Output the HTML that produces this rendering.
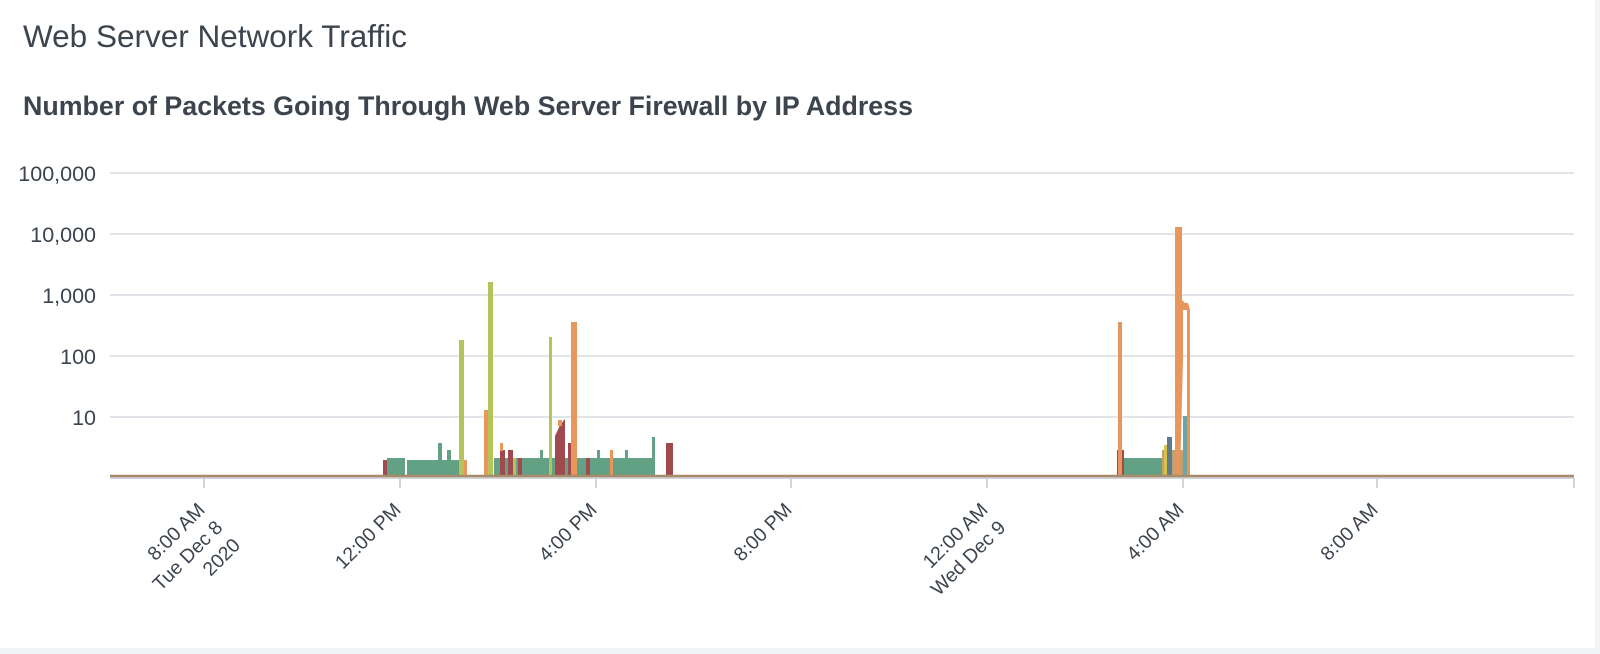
<!DOCTYPE html>
<html><head><meta charset="utf-8"><style>
html,body{margin:0;padding:0;background:#f2f3f5;}
#p{position:absolute;left:0;top:0;width:1595px;height:648px;background:#fff;}
svg{position:absolute;left:0;top:0;}
</style></head><body><div id="p"></div>
<svg width="1600" height="654" xmlns="http://www.w3.org/2000/svg" font-family="Liberation Sans, sans-serif">
<text x="23" y="47" font-size="31.5" fill="#3c444d">Web Server Network Traffic</text>
<text x="23" y="115" font-size="26.8" font-weight="bold" fill="#3c444d">Number of Packets Going Through Web Server Firewall by IP Address</text>
<g stroke="#e1e4e8" stroke-width="2">
<line x1="110" y1="173" x2="1574" y2="173"/><line x1="110" y1="234" x2="1574" y2="234"/>
<line x1="110" y1="295" x2="1574" y2="295"/><line x1="110" y1="356" x2="1574" y2="356"/>
<line x1="110" y1="417" x2="1574" y2="417"/></g>
<g font-size="21.5" fill="#3c444d" text-anchor="end">
<text x="96" y="181">100,000</text><text x="96" y="242">10,000</text><text x="96" y="303">1,000</text>
<text x="96" y="364">100</text><text x="96" y="425">10</text></g>
<g stroke="#d0d5dc" stroke-width="2">
<line x1="110" y1="478" x2="1574" y2="478"/>
<line x1="204" y1="478" x2="204" y2="488"/><line x1="400" y1="478" x2="400" y2="488"/>
<line x1="596" y1="478" x2="596" y2="488"/><line x1="791" y1="478" x2="791" y2="488"/>
<line x1="987" y1="478" x2="987" y2="488"/><line x1="1183" y1="478" x2="1183" y2="488"/>
<line x1="1377" y1="478" x2="1377" y2="488"/><line x1="1574" y1="478" x2="1574" y2="488"/></g>
<g>
<g fill="#62a183">
<rect x="387" y="458" width="18" height="18"/><rect x="407" y="460" width="57" height="16"/>
<rect x="438" y="443" width="4" height="33"/><rect x="447" y="450" width="4" height="26"/>
<rect x="494" y="458" width="160" height="18"/><rect x="597" y="450" width="3" height="26"/>
<rect x="625" y="450" width="3" height="26"/><rect x="652" y="437" width="3" height="39"/>
<rect x="540" y="450" width="3" height="26"/>
<rect x="1124" y="458" width="40" height="18"/></g>
<g fill="#a04a4f">
<rect x="383" y="460" width="4" height="16"/><rect x="500" y="450" width="5" height="26"/>
<rect x="508" y="450" width="5" height="26"/><rect x="518" y="458" width="4" height="18"/>
<path d="M555 476V436L560 425L565 419V476Z"/><rect x="568" y="443" width="3" height="33"/>
<rect x="586" y="458" width="4" height="18"/><rect x="666" y="443" width="7" height="33"/>
<rect x="1117" y="450" width="7" height="26"/><rect x="1185" y="450" width="3" height="26"/></g>
<g fill="#e8965c">
<rect x="464" y="460" width="3" height="16"/><rect x="484" y="410" width="4" height="66"/>
<rect x="500" y="443" width="3" height="8"/><rect x="558" y="420" width="4" height="6"/>
<rect x="571" y="322" width="6" height="154"/><rect x="610" y="450" width="3" height="26"/>
<rect x="1118" y="322" width="4" height="154"/></g>
<g fill="#b5c45a">
<rect x="459" y="340" width="5" height="136"/><rect x="488" y="282" width="5" height="194"/>
<rect x="549" y="337" width="3" height="139"/><rect x="513" y="458" width="3" height="18"/></g>
<rect x="1162" y="450" width="25" height="26" fill="#c4a06e"/>
<rect x="1167" y="437" width="5" height="39" fill="#5f7a8c"/>
<rect x="1183" y="416" width="4" height="60" fill="#6aa5a8"/>
<rect x="1164" y="445" width="3" height="31" fill="#d9c24a"/>
<rect x="1177" y="450" width="3" height="26" fill="#d9c24a"/>
<path d="M1175 476V227H1182V300L1185 303H1188L1190 310V476H1187V310H1183V360L1180 476Z" fill="#e8965c"/>
<line x1="110" y1="476" x2="1574" y2="476" stroke="#a88c6a" stroke-width="2.5"/>
</g>
<g font-size="19.5" fill="#3c444d" text-anchor="end">
<text transform="translate(206,511) rotate(-45)"><tspan x="0" y="0">8:00 AM</tspan><tspan x="0" dy="25">Tue Dec 8</tspan><tspan x="0" dy="25">2020</tspan></text>
<text transform="translate(402,511) rotate(-45)"><tspan x="0" y="0">12:00 PM</tspan></text>
<text transform="translate(598,511) rotate(-45)"><tspan x="0" y="0">4:00 PM</tspan></text>
<text transform="translate(793,511) rotate(-45)"><tspan x="0" y="0">8:00 PM</tspan></text>
<text transform="translate(989,511) rotate(-45)"><tspan x="0" y="0">12:00 AM</tspan><tspan x="0" dy="25">Wed Dec 9</tspan></text>
<text transform="translate(1185,511) rotate(-45)"><tspan x="0" y="0">4:00 AM</tspan></text>
<text transform="translate(1379,511) rotate(-45)"><tspan x="0" y="0">8:00 AM</tspan></text>
</g>
</svg></body></html>
